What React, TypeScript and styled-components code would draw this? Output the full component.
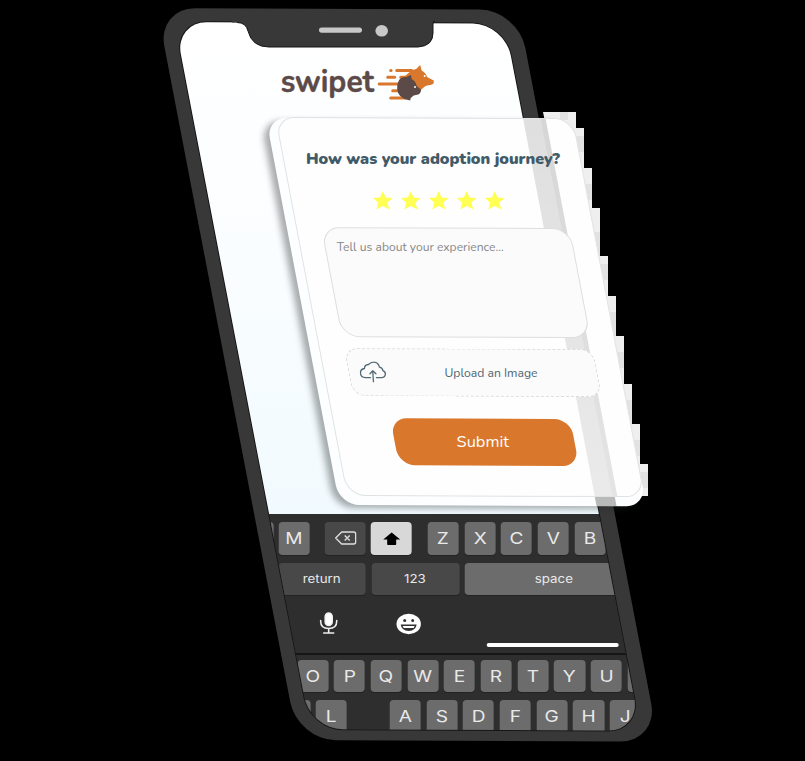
import React from "react";
import styled, { createGlobalStyle, css } from "styled-components";

const GlobalStyle = createGlobalStyle`
  * { box-sizing: border-box; }
  html, body { margin: 0; background: #000; overflow: hidden; }
`;

const Stage = styled.main`
  position: relative;
  width: 805px;
  height: 761px;
  overflow: hidden;
  background: #000;
  font-family: Nunito, Lato, "Open Sans", sans-serif;
`;

const Phone = styled.section`
  position: absolute;
  left: 157px;
  top: 8px;
  width: 361px;
  height: 732px;
  padding: 14px 16px 11px 15px;
  border-radius: 38px;
  background: #383838;
  transform: matrix(1, 0.005, 0.192, 1, 0, 0);
  transform-origin: 0 0;
`;

const Screen = styled.div`
  height: 100%;
  overflow: hidden;
  border-radius: 32px;
  background: #2e2e2e;
  box-shadow: 0 0 0 1px #161616;
`;

/* Cancels the slant of the phone so that the screen content stays upright. */
const Upright = styled.div`
  width: 480px;
  height: 730px;
  margin-left: -1px;
  display: flex;
  flex-direction: column;
  transform: matrix(1.00096, -0.005005, -0.192185, 1.00096, 0, 0);
  transform-origin: 0 0;
`;

const AppView = styled.div`
  height: 492px;
  flex: none;
  padding: 39px 0 0 105px;
  background: linear-gradient(#fff 0%, #fcfeff 35%, #f1fafe 100%);
`;

const Logo = styled.svg`
  display: block;
  width: 158px;
  height: 46px;
`;

const Keyboard = styled.div`
  display: flex;
  flex-direction: column;
  height: 240px;
  background: #2e2e2e;
  padding-top: 8px;
  font-family: Inter, sans-serif;
  color: #e9e9e9;
`;

const KeyRow = styled.div<{ $start: number; $gap?: number }>`
  display: flex;
  flex: none;
  gap: 5.5px;
  height: 32.5px;
  padding-left: ${(p) => p.$start}px;
  margin-bottom: ${(p) => p.$gap ?? 8}px;
`;

const Key = styled.div<{ $w?: number; $tone?: "dark" | "light"; $before?: number; $small?: boolean }>`
  flex: none;
  display: flex;
  align-items: center;
  justify-content: center;
  width: ${(p) => p.$w ?? 31.2}px;
  margin-left: ${(p) => p.$before ?? 0}px;
  border-radius: 4px;
  font-size: ${(p) => (p.$small ? 11.3 : 16.2)}px;
  box-shadow: 0 1px 0 #222;
  background: ${(p) => (p.$tone === "dark" ? "#484848" : p.$tone === "light" ? "#d8d8d8" : "#6c6c6c")};
  span { transform: scaleX(1.18); }
`;

const ToolRow = styled.div`
  display: flex;
  align-items: flex-start;
  height: 50px;
  flex: none;
  padding: 8px 0 0 145px;
  gap: 56.5px;
  svg { display: block; flex: none; }
  svg + svg { margin-top: -1px; }
`;

const HomeBar = styled.div`
  flex: none;
  width: 132px;
  height: 4px;
  border-radius: 2px;
  background: #fff;
`;

const HomeRow = styled.div`
  display: flex;
  align-items: flex-start;
  flex: none;
  height: 10px;
  padding-left: 313px;
  margin-top: -10px;
`;

const Divider = styled.div`
  flex: none;
  height: 2px;
  margin: 0 0 5px;
  background: #151515;
`;

const Hardware = styled.svg`
  position: absolute;
  left: 230px;
  top: 14px;
`;

const Blocks = styled.svg`
  position: absolute;
  left: 500px;
  top: 108px;
`;

const slant = css`
  transform: matrix(1, 0.004, 0.19, 1, 0, 0);
  transform-origin: 0 0;
`;

const CardBase = styled.div`
  position: absolute;
  left: 265.5px;
  top: 117.5px;
  width: 307px;
  height: 387px;
  border-radius: 20px;
  background: #fdfeff;
  box-shadow: -6px 3px 6px rgba(35, 40, 40, 0.38);
  ${slant}
`;

const BaseRim = styled.i`
  position: absolute;
  bottom: 0;
  left: 257px;
  width: 20px;
  height: 10px;
  background: #b9b9b9;
`;

const Card = styled.form`
  position: absolute;
  left: 274.5px;
  top: 116.5px;
  width: 298px;
  height: 379px;
  margin: 0;
  display: flex;
  flex-direction: column;
  align-items: center;
  border: 1px solid #dfe3e4;
  border-radius: 19px;
  background: #fefefe;
  ${slant}
`;

const Rim = styled.i`
  position: absolute;
  top: 0;
  left: 247px;
  width: 24px;
  height: 377px;
  background: linear-gradient(90deg, #dfdfdf 0 17px, #d6d6d6 18px 22px, #fefefe 23px);
  &::after {
    content: "";
    position: absolute;
    inset: 0;
    background: linear-gradient(rgba(255, 255, 255, 0), rgba(255, 255, 255, 0.35));
  }
`;

const flat = css`
  transform: matrix(1, -0.004, -0.19, 1, 0, 0);
`;

const Title = styled.h1`
  position: relative;
  margin: 29px 0 0 2px;
  height: 22px;
  font-size: 16.1px;
  line-height: 22px;
  font-weight: 900;
  letter-spacing: -0.05px;
  white-space: nowrap;
  color: #425b69;
  ${flat}
`;

const Stars = styled.div`
  position: relative;
  display: flex;
  gap: 6px;
  margin: 20px 2px 0 0;
  height: 22px;
  ${flat}
`;

const Panel = styled.div<{ $dashed?: boolean }>`
  position: relative;
  flex: none;
  display: flex;
  width: 249px;
  border: 1px ${(p) => (p.$dashed ? "dashed #dcdcdc" : "solid #dcdedf")};
  background: #fbfbfb;
`;

const Experience = styled(Panel)`
  height: 110px;
  margin-top: 16px;
  border-radius: 18px;
  padding: 10px 0 0 11px;
`;

const Upload = styled(Panel)`
  height: 48px;
  margin-top: 11px;
  border-radius: 13px;
  align-items: center;
  padding-left: 10px;
`;

const Label = styled.span<{ $size: number; $color: string }>`
  display: block;
  height: 18px;
  line-height: 18px;
  font-size: ${(p) => p.$size}px;
  color: ${(p) => p.$color};
  white-space: nowrap;
  ${flat}
`;

const CloudIcon = styled.svg`
  flex: none;
  margin-right: 58px;
  ${flat}
`;

const Submit = styled.button`
  position: relative;
  flex: none;
  display: flex;
  align-items: center;
  justify-content: center;
  width: 180px;
  height: 47px;
  margin: 21.5px 3px 0 0;
  padding: 0 2px 1px 0;
  border: 0;
  border-radius: 16px;
  background: #d9782d;
  font-family: inherit;
`;

const Letters = ({ text }: { text: string }) => (
  <>
    {text.split("").map((c) => (
      <Key key={c}><span>{c}</span></Key>
    ))}
  </>
);

const Star = () => (
  <svg width="22" height="22" viewBox="0 0 22 22">
    <path d="M11 1.500 13.800 7.800 21 8.300 15.600 13 17.600 20 11 16.500 4.600 20 6.400 13 1 8.300 8 7.800Z" fill="#ffff54" />
  </svg>
);

const SwipetLogo = () => (
  <Logo viewBox="279 60 158 46">
    <text x="281" y="90.500" fontFamily="Nunito, Lato" fontWeight="700" fontSize="31" textLength="93.500" lengthAdjust="spacingAndGlyphs" fill="#5c4a48" stroke="#5c4a48" strokeWidth=".4">
      swipet
    </text>
    <g stroke="#d9782d" strokeWidth="3" strokeLinecap="round">
      <path d="M391 69.500h.4M397 69.500h15M388 76.300h7M401 76.300h8M379.500 83h20M393 89.700h8M391 97h15" />
    </g>
    <path d="M410 71Q413 68.500 416.500 68L420.500 64 422 69.500Q426 71.500 427.500 76L434 79.500Q435 83 431 84 426 84 424 86.500L420 90 408 86 403 77Z" fill="#d9782d" />
    <path d="M401 77.200Q403.500 75.700 406.500 76L411.300 74 412 78Q416.500 80.500 417 85L421.300 88.500Q421.500 92 418.500 93.500L414 94.500Q411 96 410.500 99.500 404 98.500 400.500 95 397 91 397.500 85.500 398 80 401 77.200Z" fill="#5c4a48" />
    <circle cx="425" cy="75" r="1" fill="#fff" />
    <circle cx="415.300" cy="86" r="1" fill="#fff" />
  </Logo>
);

export default function App() {
  return (
    <>
      <GlobalStyle />
      <Stage>
        <Phone>
          <Screen>
            <Upright>
              <AppView><SwipetLogo /></AppView>
              <Keyboard>
                <KeyRow $start={68.5}>
                  <Key />
                  <Key><span>M</span></Key>
                  <Key $w={40.5} $tone="dark" $before={9.5}>
                    <svg width="22" height="14" viewBox="0 0 22 14" fill="none" stroke="#dedede" strokeWidth="1.4" strokeLinejoin="round">
                      <path d="M7 1h12q2 0 2 2v8q0 2-2 2H7L1 7ZM10 4.500l5 5M15 4.500l-5 5" />
                    </svg>
                  </Key>
                  <Key $w={41} $tone="light">
                    <svg width="18" height="13" viewBox="0 0 18 13"><path d="M9 .5 17.500 7.500H13.500V12q0 1-1 1h-7q-1 0-1-1V7.500H.5Z" fill="#000" /></svg>
                  </Key>
                  <Key $before={10}><span>Z</span></Key>
                  <Letters text="XCVB" />
                </KeyRow>
                <KeyRow $start={105} $gap={7.5}>
                  <Key $w={87} $tone="dark" $small><span>return</span></Key>
                  <Key $w={88} $tone="dark" $small><span>123</span></Key>
                  <Key $w={178} $small><span>space</span></Key>
                </KeyRow>
                <ToolRow>
                  <svg width="20" height="24" viewBox="0 0 20 24" fill="none" stroke="#eee" strokeWidth="1.6" strokeLinecap="round">
                    <rect x="6.500" y="2" width="7" height="12.500" rx="3.500" fill="#fff" />
                    <path d="M2 9.500v1q0 7 8 7t8-7v-1M10 18v4M5 22h10" />
                  </svg>
                  <svg width="26" height="26" viewBox="0 0 26 26">
                    <ellipse cx="13" cy="14" rx="12.200" ry="10.200" fill="#fff" />
                    <circle cx="9" cy="10.500" r="1.500" fill="#333" />
                    <circle cx="17" cy="10.500" r="1.500" fill="#333" />
                    <path d="M5 14.500h16q-1 6.500-8 6.500t-8-6.500Z" fill="#333" />
                    <path d="M7 16h12l-1 2H8Z" fill="#fff" />
                  </svg>
                </ToolRow>
                <HomeRow><HomeBar /></HomeRow>
                <Divider />
                <KeyRow $start={123.5}>
                  <Letters text="OPQWERTYU" />
                  <Key />
                </KeyRow>
                <KeyRow $start={105.5}>
                  <Key />
                  <Key><span>L</span></Key>
                  <Key $before={37}><span>A</span></Key>
                  <Letters text="SDFGHJ" />
                </KeyRow>
              </Keyboard>
            </Upright>
          </Screen>
        </Phone>
        <Hardware width="220" height="40" viewBox="230 14 220 40">
          <path d="M232 22.500H237Q246 22.500 248 31 252 47 269 47H418Q433 46 433 33V24Q433 21 435 21V14H232Z" fill="#383838" />
          <path d="M237 22.500Q246 22.500 248 31 252 47 269 47H418Q433 46 433 33V24Q433 21 435 21" fill="none" stroke="#161616" />
          <rect x="319" y="27.500" width="43" height="5.200" rx="2.600" fill="#c8c8c8" />
          <ellipse cx="381.700" cy="30.800" rx="6.300" ry="5.800" fill="#c8c8c8" />
        </Hardware>
        <Blocks width="152" height="392" viewBox="500 108 152 392">
          <path d="M543 112H576V128H584V168H592V208H600V256H608V296H616V336H624V384H632V424H640V464H648V496H620Z" fill="#efefef" />
          <path d="M560 112h8v8h-8ZM576 136h8v16h-8ZM584 184h8v16h-8ZM592 232h8v24h-8ZM600 264h8v16h-8ZM608 312h8v24h-8ZM616 352h8v16h-8ZM624 400h8v24h-8ZM632 440h8v16h-8ZM640 472h8v16h-8Z" fill="#e2e2e2" />
        </Blocks>
        <CardBase><BaseRim /></CardBase>
        <Card onSubmit={(e) => e.preventDefault()}>
          <Rim />
          <Title>How was your adoption journey?</Title>
          <Stars>{[1, 2, 3, 4, 5].map((n) => <Star key={n} />)}</Stars>
          <Experience>
            <Label $size={12.1} $color="#868686">Tell us about your experience...</Label>
          </Experience>
          <Upload $dashed>
            <CloudIcon width="27" height="22" viewBox="0 0 27 22" fill="none" stroke="#526a74" strokeWidth="1.3" strokeLinecap="round" strokeLinejoin="round">
              <path d="M11 16.500H6Q1 16 1 11.500 1 8 5 7.300 5 3.500 9 3.300 12 .3 16 1.200 19 2 20 6 23 6.500 23.500 9.500 26 10.500 26 13 25.500 16.500 22 16.500H17M14 20.500 13.300 10M10.500 12.500 13.300 9.500 16.500 12.500" />
            </CloudIcon>
            <Label $size={12.2} $color="#4f6672">Upload an Image</Label>
          </Upload>
          <Submit type="submit">
            <Label $size={16.4} $color="#fff">Submit</Label>
          </Submit>
        </Card>
      </Stage>
    </>
  );
}
